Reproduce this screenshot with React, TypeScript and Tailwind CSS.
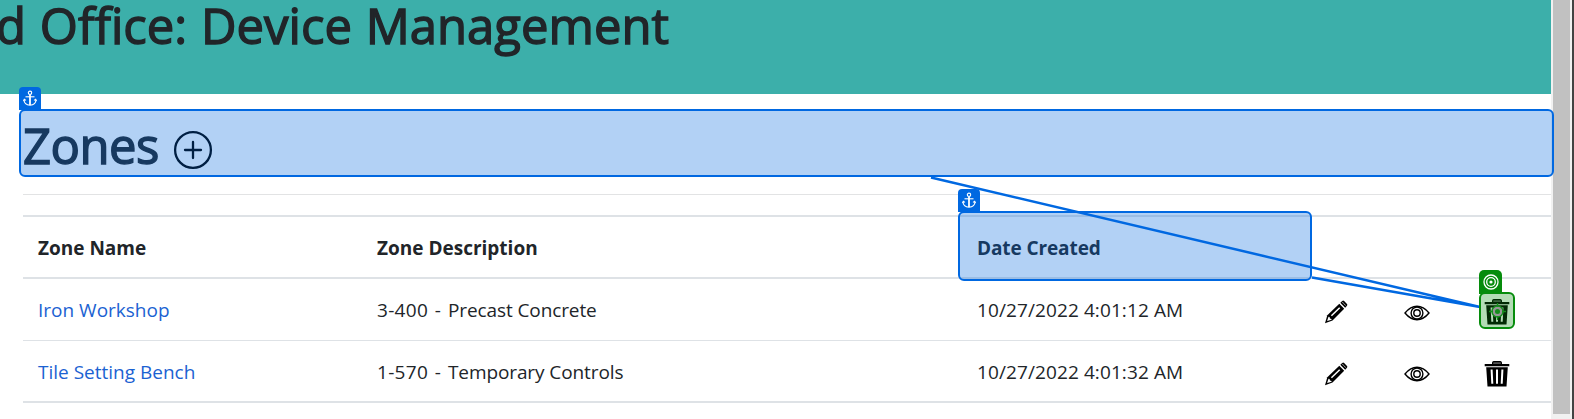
import React from "react";

const rows = [
  { name: "Iron Workshop", code: "3-400 -", title: "Precast Concrete", created: "10/27/2022 4:01:12 AM" },
  { name: "Tile Setting Bench", code: "1-570 -", title: "Temporary Controls", created: "10/27/2022 4:01:32 AM" },
];

function AnchorIcon() {
  return (
    <svg width="14" height="17" viewBox="0 0 14 17" fill="none" stroke="white" strokeWidth="1.1">
      <circle cx="7" cy="2.8" r="1.7" />
      <path d="M7 4.5V15" strokeWidth="1.8" />
      <path d="M2.5 6.8h9" />
      <path d="M.9 9.6c.2 3.4 2.9 5.4 6.1 5.7 3.2-.3 5.9-2.3 6.1-5.7M.3 11l1-1.8 1.7 1.2M13.7 11l-1-1.8-1.7 1.2" />
    </svg>
  );
}

function PlusCircle() {
  return (
    <svg className="ml-[14px] mt-[11px]" width="40" height="40" viewBox="0 0 40 40" fill="none" stroke="black" strokeWidth="2.3" strokeLinecap="round">
      <circle cx="20" cy="20" r="17.9" />
      <path d="M20 12v16M12 20h16" />
    </svg>
  );
}

function Pencil() {
  return (
    <svg width="24" height="24" viewBox="0 0 24 24">
      <path d="M1 23.2 3.3 15.3 15.3 3.7 20.2 8.8 8.5 20.6Z" />
      <path d="M16.3 2.8 18.3.9Q19.2.2 20.1 1L23 4Q23.7 4.9 23 5.7L21.2 7.7Z" />
      <path d="M3.1 21.1 4.5 16.8 5.6 17 5.9 18.500 7.500 18.900 7.600 19.700Z" fill="white" />
      <path d="m7.400 15.800 8.300-8.100" stroke="white" strokeWidth="1.500" />
      <path d="m18.500 2.200 1.400 1.500M20.400 4.200l1.200 1.300" stroke="white" strokeWidth=".8" />
    </svg>
  );
}

function Eye() {
  return (
    <svg width="26" height="16" viewBox="0 0 26 16" fill="none" stroke="black" strokeWidth="1.4">
      <path d="M1 8Q6.500 1.300 13 1.300T25 8Q19.500 14.700 13 14.700T1 8Z" />
      <circle cx="13" cy="8" r="5.900" />
      <circle cx="13" cy="8" r="3.200" />
    </svg>
  );
}

function Trash() {
  return (
    <svg width="26" height="26" viewBox="0 0 26 26">
      <path d="M8.6 3.3V1.7Q8.7.7 9.7.7h6.6q1 0 1.1 1v1.6" fill="#555" stroke="black" strokeWidth="1.2" />
      <path d="M.7 3h24.600v2.200H.7zM2.200 6.300h21.600L22.500 25.500H3.500z" />
      <path d="M7.600 8.500 8.300 22.800M13 8.500v14.300M18.400 8.500 17.700 22.800" stroke="white" strokeWidth="2" />
    </svg>
  );
}

function AnchorBadge() {
  return (
    <div className="absolute -left-[2px] -top-[24px] flex h-[23px] w-[22px] items-center justify-center rounded-t-[4px] bg-[#0068e1]">
      <AnchorIcon />
    </div>
  );
}

export default function App() {
  return (
    <div className="relative flex h-[419px] w-[1574px] overflow-hidden bg-white font-['Open_Sans',sans-serif] text-[#212529]">
      <main className="w-[1551px] shrink-0">
        <header className="h-[94px] overflow-hidden bg-[#3cafaa]">
          <h1 className="-ml-[4px] -mt-[9px] whitespace-nowrap text-[49px] font-medium leading-[68px] tracking-[0.02px] [word-spacing:1px] [-webkit-text-stroke:1.4px_#212529]">d Office: Device Management</h1>
        </header>
        <section className="pl-[23px]">
          <div className="mt-[17px] flex h-[66px] items-center">
            <h1 className="mt-[2px] text-[49px] font-medium leading-[60px] tracking-[-0.5px] [-webkit-text-stroke:1.4px_#212529]">Zones</h1>
            <PlusCircle />
          </div>
          <hr className="mt-[17px] border-t border-[#e2e3e4]" />
          <table className="mt-[20px] w-[1528px] table-fixed border-separate border-spacing-0 text-left text-[19px] leading-[30px]">
            <colgroup>
              <col className="w-[339px]" />
              <col className="w-[600px]" />
              <col className="w-[347px]" />
              <col className="w-[81px]" />
              <col className="w-[81px]" />
              <col className="w-[80px]" />
            </colgroup>
            <thead>
              <tr className="h-[64px] *:border-y-2 *:border-[#dee2e6] *:px-[15px] *:pb-0 *:pt-[2px]">
                <th>Zone Name</th>
                <th>Zone Description</th>
                <th><span className="tracking-[-0.1px]">Date Created</span></th>
                <th /><th /><th />
              </tr>
            </thead>
            <tbody>
              {rows.map((r) => (
                <tr key={r.name} className="h-[62px] *:border-b *:border-[#dee2e6] *:px-[15px] *:pt-px *:pb-0 last:*:border-b-2">
                  <td><a className="text-[#1b62d2]">{r.name}</a></td>
                  <td><span className="tracking-[0.3px] [word-spacing:1.5px]">{r.code} </span><span className="tracking-[-0.1px]">{r.title}</span></td>
                  <td><span className="tracking-[0.1px]">{r.created}</span></td>
                  <td><div className="mt-[4px]"><Pencil /></div></td>
                  <td><div className="mt-[5px] -ml-px"><Eye /></div></td>
                  <td><div className="mt-[4px] -ml-[2px]"><Trash /></div></td>
                </tr>
              ))}
            </tbody>
          </table>
        </section>
      </main>
      <aside className="flex h-full w-[23px] shrink-0 bg-[#f1f1f1]">
        <div className="ml-[2px] h-[414px] w-[17px] bg-[#c1c1c1]" />
        <div className="ml-[2px] h-full w-[2px] bg-[#434343]" />
      </aside>

      <div className="absolute left-[19px] top-[109px] h-[68px] w-[1535px] rounded-[6px] border-2 border-[#0068e1] bg-[#0068e1]/30">
        <AnchorBadge />
      </div>
      <div className="absolute left-[958px] top-[211px] h-[70px] w-[354px] rounded-[6px] border-2 border-[#0068e1] bg-[#0068e1]/30">
        <AnchorBadge />
      </div>
      <svg className="absolute left-0 top-0" width="1574" height="419" fill="none" stroke="#0068e1" strokeWidth="2.5">
        <path d="M931 177.5 1480 307M1312 277.5 1480 307" />
      </svg>
      <div className="absolute left-[1479px] top-[292px] h-[37px] w-[36px] rounded-[6px] border-2 border-[#068c0c] bg-[#068c0c]/30">
        <div className="absolute -left-[2px] -top-[24px] flex h-[24px] w-[23px] items-center justify-center rounded-t-[5px] bg-[#068c0c]">
          <svg width="16" height="16" viewBox="0 0 16 16" fill="none" stroke="white" strokeWidth="1.3">
            <circle cx="8" cy="8" r="7" />
            <circle cx="8" cy="8" r="4.3" />
            <circle cx="8" cy="8" r="1.6" fill="white" stroke="none" />
          </svg>
        </div>
        <svg className="absolute left-[8px] top-[9px]" width="17" height="17" viewBox="0 0 17 17" fill="none" stroke="#148d1b" strokeWidth="1.4">
          <circle cx="8.5" cy="8.5" r="5.5" fill="#969696" />
          <circle cx="8.5" cy="8.5" r="2.5" fill="#148d1b" stroke="none" />
          <path d="M8.5 0v4M8.5 13v4M0 8.5h4M13 8.5h4" />
        </svg>
      </div>
    </div>
  );
}
